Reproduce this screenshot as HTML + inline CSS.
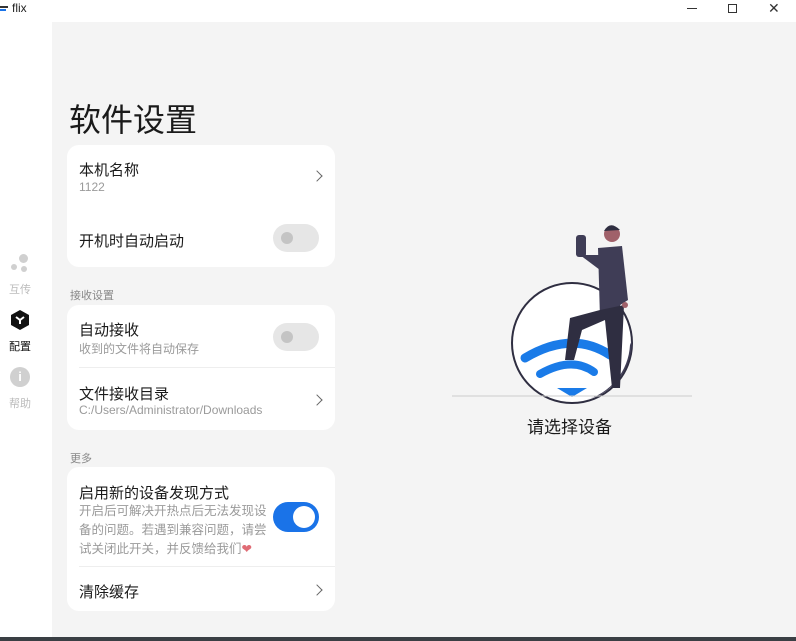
<!DOCTYPE html>
<html><head><meta charset="utf-8"><style>
*{margin:0;padding:0;box-sizing:border-box}
body{width:796px;height:641px;background:#fff;font-family:"Liberation Sans","Noto Sans CJK SC",sans-serif;position:relative;overflow:hidden;color:#1a1a1a}
.abs{position:absolute}
.main{left:52px;top:22px;width:744px;height:615px;background:#f4f4f4}
.bot{left:0;top:637px;width:796px;height:4px;background:#3a3f44}
.card{position:absolute;left:67px;width:268px;background:#fff;border-radius:12px}
.t{position:absolute;left:12px;font-size:15px;color:#1a1a1a}
.s{position:absolute;left:12px;font-size:12px;color:#9a9a9a}
.chev{position:absolute;right:14px;width:8px;height:8px;border-right:1.5px solid #666;border-top:1.5px solid #666;transform:rotate(45deg)}
.tog{position:absolute;left:206px;width:46px;height:28px;border-radius:14px;background:#e6e6e6}
.tog i{position:absolute;left:8px;top:8px;width:12px;height:12px;border-radius:6px;background:#c4c4c4}
.sec{position:absolute;left:70px;font-size:11px;color:#888}
.nav{position:absolute;width:40px;text-align:center;font-size:11px}
</style></head><body>
<div class="abs" style="left:0;top:6px;width:8px;height:1.5px;background:#333"></div>
<div class="abs" style="left:0;top:9px;width:6px;height:1.5px;background:#1a73e8"></div>
<div class="abs" style="left:12px;top:1px;font-size:12px;color:#222">flix</div>
<div class="abs" style="left:687px;top:8px;width:10px;height:1px;background:#333"></div>
<div class="abs" style="left:728px;top:4px;width:9px;height:9px;border:1px solid #333"></div>
<div class="abs" style="left:768px;top:0px;font-size:14px;color:#333">✕</div>
<div class="abs main"></div>
<div class="abs bot"></div>

<div class="abs" style="left:19px;top:254px;width:9px;height:9px;border-radius:50%;background:#d0d0d0"></div>
<div class="abs" style="left:11px;top:264px;width:6px;height:6px;border-radius:50%;background:#d0d0d0"></div>
<div class="abs" style="left:21px;top:266px;width:6px;height:6px;border-radius:50%;background:#d0d0d0"></div>
<div class="nav" style="left:0;top:281px;color:#bbb">互传</div>
<svg class="abs" style="left:10px;top:309px" width="20" height="22" viewBox="0 0 20 22"><path d="M10 1 L19 6 V16 L10 21 L1 16 V6Z" fill="#111"/><path d="M6 8 L10 11 L14 8 M10 11 V15" stroke="#fff" stroke-width="2" fill="none"/></svg>
<div class="nav" style="left:0;top:338px;color:#111">配置</div>
<div class="abs" style="left:10px;top:367px;width:20px;height:20px;border-radius:50%;background:#d0d0d0;color:#fff;font-size:13px;font-weight:bold;text-align:center;line-height:20px">i</div>
<div class="nav" style="left:0;top:395px;color:#bbb">帮助</div>

<div class="abs" style="left:69px;top:95px;font-size:32px;color:#1a1a1a">软件设置</div>

<div class="card" style="top:145px;height:122px">
<div class="t" style="top:14px">本机名称</div>
<div class="s" style="top:35px">1122</div>
<div class="chev" style="top:27px"></div>
<div class="t" style="top:85px">开机时自动启动</div>
<div class="tog" style="top:79px"><i></i></div>
</div>
<div class="sec" style="top:287px">接收设置</div>
<div class="card" style="top:305px;height:125px">
<div class="t" style="top:14px">自动接收</div>
<div class="s" style="top:35px">收到的文件将自动保存</div>
<div class="tog" style="top:18px"><i></i></div>
<div class="abs" style="left:12px;right:0;top:62px;height:1px;background:#eee"></div>
<div class="t" style="top:78px">文件接收目录</div>
<div class="s" style="top:98px">C:/Users/Administrator/Downloads</div>
<div class="chev" style="top:91px"></div>
</div>
<div class="sec" style="top:450px">更多</div>
<div class="card" style="top:467px;height:144px">
<div class="t" style="top:15px">启用新的设备发现方式</div>
<div class="s" style="top:35px;width:194px;line-height:19px;font-size:12.5px">开启后可解决开热点后无法发现设备的问题。若遇到兼容问题，请尝试关闭此开关，并反馈给我们<span style="color:#e06c75">❤</span></div>
<div class="abs" style="left:206px;top:35px;width:46px;height:30px;border-radius:15px;background:#1a73e8"><i style="position:absolute;left:20px;top:4px;width:22px;height:22px;border-radius:11px;background:#fff"></i></div>
<div class="abs" style="left:12px;right:0;top:99px;height:1px;background:#eee"></div>
<div class="t" style="top:114px">清除缓存</div>
<div class="chev" style="top:119px"></div>
</div>

<svg class="abs" style="left:440px;top:215px" width="270" height="190" viewBox="440 215 270 190">
<circle cx="572" cy="343" r="60" fill="#fff" stroke="#2f2e41" stroke-width="2"/>
<path d="M630 345 A60 60 0 0 1 585 400 L598 396 A62 62 0 0 0 632 340Z" fill="#3f3d56"/>
<path d="M525 358 Q572 330 610 355" stroke="#1a7be8" stroke-width="9" fill="none" stroke-linecap="round"/>
<path d="M540 374 Q572 356 594 372" stroke="#1a7be8" stroke-width="8" fill="none" stroke-linecap="round"/>
<path d="M557 388 L587 388 L572 397Z" fill="#1a7be8"/>
<line x1="452" y1="396" x2="692" y2="396" stroke="#ccc" stroke-width="1"/>
<rect x="576" y="235" width="10" height="22" rx="3" fill="#3f3d56"/>
<circle cx="612" cy="234" r="8" fill="#a0616a"/>
<path d="M604 231 Q610 220 620 230 Z" fill="#2f2e41"/>
<path d="M598 248 L622 246 L628 300 L600 318 Z" fill="#3f3d56"/>
<path d="M580 255 L600 270 L600 255Z" fill="#3f3d56"/>
<path d="M600 310 L570 318 L565 360 L574 360 L582 330 L605 320 L612 388 L620 388 L624 305Z" fill="#2f2e41"/>
<circle cx="625" cy="305" r="3" fill="#a0616a"/>
</svg>
<div class="abs" style="left:527px;top:413px;font-size:17px;color:#1a1a1a">请选择设备</div>
</body></html>
